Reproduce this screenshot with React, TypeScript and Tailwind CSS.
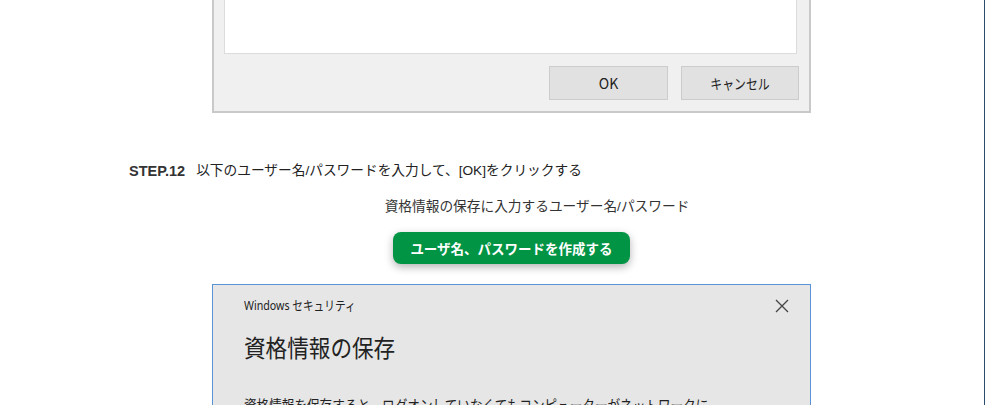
import React from "react";

const jp = { fontFamily: '"Noto Sans CJK JP", "Noto Sans", sans-serif' };
const arialJp = { fontFamily: '"Liberation Sans", "Noto Sans CJK JP", sans-serif' };

export default function App() {
  return (
    <div className="w-[985px] h-[405px] overflow-hidden bg-white border-r border-[#2c4c6c] flex flex-col text-[#333]" style={arialJp}>
      {/* Top dialog (cropped) */}
      <div className="ml-[212px] w-[599px] h-[113px] shrink-0 bg-[#f0f0f0] border-x-2 border-b-2 border-[#c9c9c9] flex flex-col pl-[10px] pr-[10px]">
        <div className="h-[54px] bg-white border-x border-b border-[#dcdcdc] mr-[2px]" />
        <div className="flex justify-end gap-[13px] mt-[12px]">
          <div className="w-[119px] h-[34px] bg-[#e1e1e1] border border-[#cccccc] flex items-center justify-center text-[14px] text-[#222]" style={jp}>OK</div>
          <div className="w-[118px] h-[34px] bg-[#e1e1e1] border border-[#cccccc] flex items-center justify-center text-[14px] text-[#222]" style={jp}>
            <span className="inline-block scale-x-[0.85]">キャンセル</span>
          </div>
        </div>
      </div>

      {/* STEP line */}
      <div className="pl-[129px] mt-[49px] h-[18px] flex items-center leading-[18px]">
        <span className="font-bold text-[14.5px] text-[#333]">STEP.12</span>
        <span className="ml-[11px] text-[13.7px] text-[#222]">以下のユーザー名/パスワードを入力して、[OK]をクリックする</span>
      </div>

      {/* Center text */}
      <div className="ml-[129px] w-[816px] mt-[18px] h-[18px] text-center text-[13.7px] leading-[18px] text-[#333]">
        資格情報の保存に入力するユーザー名/パスワード
      </div>

      {/* Green button */}
      <div className="ml-[212px] w-[599px] flex justify-center mt-[16px]">
        <div className="w-[237px] h-[32px] rounded-[8px] bg-[#009444] text-white font-bold text-[13.5px] flex items-center justify-center shadow-[0_3px_8px_rgba(0,0,0,0.3)]" style={jp}>
          ユーザ名、パスワードを作成する
        </div>
      </div>

      {/* Bottom dialog */}
      <div className="ml-[212px] w-[599px] mt-[20px] h-[200px] shrink-0 bg-[#e6e6e6] border border-[#5a93d6] pl-[31px] pr-[20px]" style={jp}>
        <div className="flex items-center justify-between mt-[11px] h-[20px]">
          <span className="inline-block origin-left scale-x-[0.82] text-[13px] text-[#222] whitespace-nowrap" style={{ fontFamily: '"Noto Sans", "Noto Sans CJK JP", sans-serif' }}>Windows セキュリティ</span>
          <svg width="14" height="14" viewBox="0 0 14 14" className="mr-[1px]">
            <path d="M1 1 L13 13 M13 1 L1 13" stroke="#444" strokeWidth="1.3" />
          </svg>
        </div>
        <div className="mt-[15px] text-[24px] leading-[32px] text-[#222]">
          <span className="inline-block origin-left scale-x-[0.9] whitespace-nowrap">資格情報の保存</span>
        </div>
        <div className="mt-[31px] text-[15px] leading-[22px] text-[#222]">
          <span className="inline-block origin-left scale-x-[0.84] whitespace-nowrap">資格情報を保存すると、ログオンしていなくてもコンピューターがネットワークに</span>
        </div>
      </div>
    </div>
  );
}
